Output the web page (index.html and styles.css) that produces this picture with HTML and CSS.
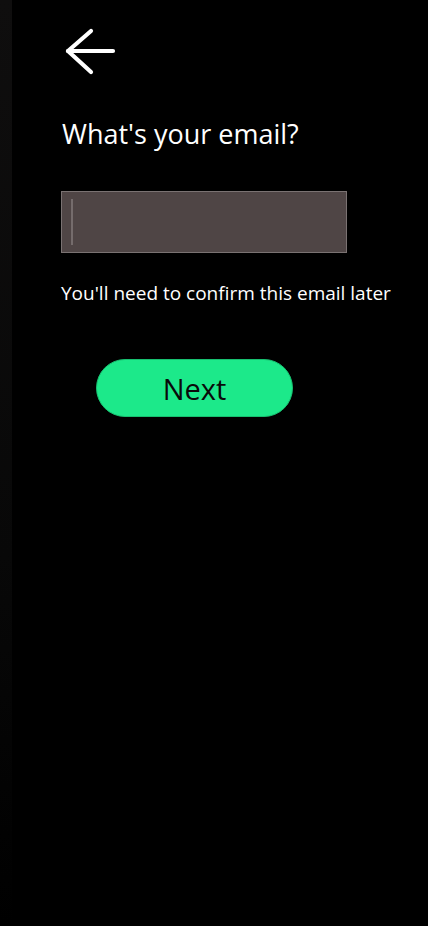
FILE: index.html
```html
<!DOCTYPE html>
<html lang="en">
<head>
<meta charset="utf-8">
<title>What's your email?</title>
<link rel="stylesheet" href="styles.css">
</head>
<body>
<div class="screen">
  <div class="rail"></div>
  <main class="main">
    <button class="back" aria-label="Back">
      <svg width="52" height="48" viewBox="0 0 52 48" fill="none" stroke="#fff" stroke-width="4.2" stroke-linecap="round" stroke-linejoin="round">
        <path d="M4 23 H49"/>
        <path d="M27 3 L4 23 L27 44"/>
      </svg>
    </button>
    <h1 class="title">What's your email?</h1>
    <div class="field"><span class="caret"></span></div>
    <p class="hint">You'll need to confirm this email later</p>
    <button class="next">Next</button>
  </main>
</div>
</body>
</html>
```
FILE: styles.css
```css
* { box-sizing: border-box; }
html, body { margin: 0; padding: 0; background: #000; }
body { font-family: "Open Sans", "Noto Sans", sans-serif; color: #fff; }
.screen { display: flex; min-height: 926px; }
.rail { width: 12px; flex: none; background: linear-gradient(#0f0e0e, #080808 60%, #000); }
.main { flex: 1; padding: 28px 0 0 49px; display: flex; flex-direction: column; align-items: flex-start; }
.back { background: none; border: 0; padding: 0; margin: 0 0 0 3px; width: 52px; height: 48px; display: block; }
.back svg { display: block; }
.title { font-size: 27px; font-weight: 400; margin: 40px 0 0 1px; line-height: 36px; }
.field { margin-top: 39px; width: 286px; height: 62px; background: #4f4545; border: 1px solid #7a7272; padding: 7px 9px; }
.caret { display: block; width: 2px; height: 46px; background: #756c6c; }
.hint { font-size: 19px; margin: 27px 0 0 0; line-height: 26px; }
.next { margin: 53px 0 0 35px; width: 197px; height: 58px; border-radius: 29px; background: #1ce98a; border: 1px solid #17c070; font-family: "Open Sans", "Noto Sans", sans-serif; font-size: 29px; color: #0a0a0a; padding: 0; line-height: 1; }
```
